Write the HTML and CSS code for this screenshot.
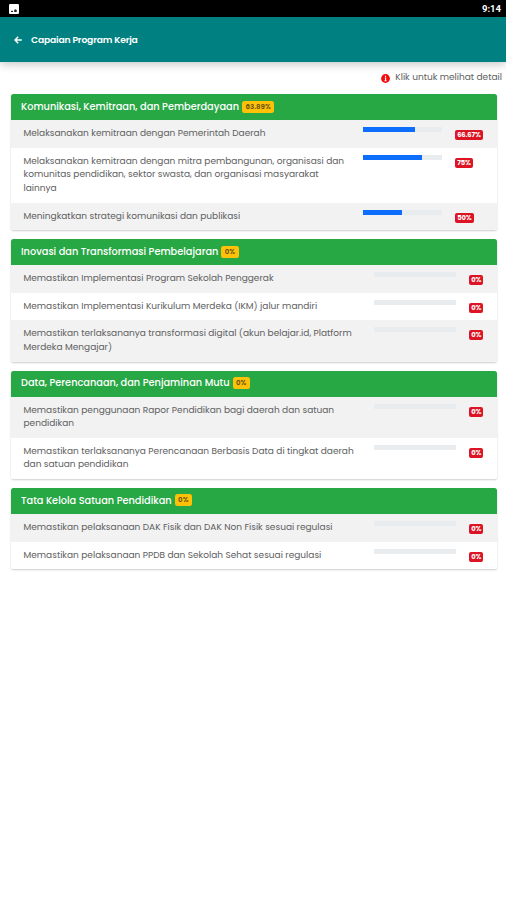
FILE: index.html
```html
<!DOCTYPE html>
<html lang="id">
<head>
<meta charset="utf-8">
<title>Capaian Program Kerja</title>
<link rel="stylesheet" href="styles.css">
</head>
<body>
<div class="status">
  <svg width="10" height="10" viewBox="0 0 10 10"><rect width="10" height="10" rx="1.2" fill="#fff"/><path d="M2 8V6.6l1 .6L4 6.6V8zM5.2 8V6l1.2-.8L7.7 6v2z" fill="#222"/></svg>
  <span class="clock">9:14</span>
</div>
<header class="appbar">
  <svg width="8" height="8" viewBox="0 0 8 8" fill="none" stroke="#fff" stroke-width="1.5"><path d="M7.8 4H1M4.2.8 1 4l3.2 3.2"/></svg>
  <h1>Capaian Program Kerja</h1>
</header>
<main>
  <p class="hint"><svg width="9" height="9" viewBox="0 0 9 9"><circle cx="4.5" cy="4.5" r="4.4" fill="#f50a0a"/><path d="M4.5 1.7v1.2M3.8 4h.8v2.7M3.5 6.7h2" stroke="#fff" stroke-width="1.1" fill="none"/></svg><span>Klik untuk melihat detail</span></p>

  <section class="card wide">
    <h2><span>Komunikasi, Kemitraan, dan Pemberdayaan</span><b class="tag">63.89%</b></h2>
    <div class="row"><p>Melaksanakan kemitraan dengan Pemerintah Daerah</p><div class="bar"><i style="width:66.67%"></i></div><b class="pct">66.67%</b></div>
    <div class="row"><p>Melaksanakan kemitraan dengan mitra pembangunan, organisasi dan<br>komunitas pendidikan, sektor swasta, dan organisasi masyarakat<br>lainnya</p><div class="bar"><i style="width:75%"></i></div><b class="pct">75%</b></div>
    <div class="row"><p>Meningkatkan strategi komunikasi dan publikasi</p><div class="bar"><i style="width:50%"></i></div><b class="pct">50%</b></div>
  </section>

  <section class="card">
    <h2><span>Inovasi dan Transformasi Pembelajaran</span><b class="tag">0%</b></h2>
    <div class="row"><p>Memastikan Implementasi Program Sekolah Penggerak</p><div class="bar"></div><b class="pct">0%</b></div>
    <div class="row"><p>Memastikan Implementasi Kurikulum Merdeka (IKM) jalur mandiri</p><div class="bar"></div><b class="pct">0%</b></div>
    <div class="row"><p>Memastikan terlaksananya transformasi digital (akun belajar.id, Platform<br>Merdeka Mengajar)</p><div class="bar"></div><b class="pct">0%</b></div>
  </section>

  <section class="card">
    <h2><span>Data, Perencanaan, dan Penjaminan Mutu</span><b class="tag">0%</b></h2>
    <div class="row"><p>Memastikan penggunaan Rapor Pendidikan bagi daerah dan satuan<br>pendidikan</p><div class="bar"></div><b class="pct">0%</b></div>
    <div class="row"><p>Memastikan terlaksananya Perencanaan Berbasis Data di tingkat daerah<br>dan satuan pendidikan</p><div class="bar"></div><b class="pct">0%</b></div>
  </section>

  <section class="card">
    <h2><span>Tata Kelola Satuan Pendidikan</span><b class="tag">0%</b></h2>
    <div class="row"><p>Memastikan pelaksanaan DAK Fisik dan DAK Non Fisik sesuai regulasi</p><div class="bar"></div><b class="pct">0%</b></div>
    <div class="row"><p>Memastikan pelaksanaan PPDB dan Sekolah Sehat sesuai regulasi</p><div class="bar"></div><b class="pct">0%</b></div>
  </section>
</main>
</body>
</html>
```

FILE: styles.css
```css
* { box-sizing: border-box; }
body { margin: 0; background: #fff; color: #606060; font: 9px/13.6px Poppins, Inter, "Open Sans", sans-serif; }
h1, h2, p { margin: 0; }
svg { display: block; flex: none; }
.status { height: 17px; background: #000; display: flex; align-items: center; justify-content: space-between; padding: 1px 5px 0 9px; }
.clock { color: #fff; font: 700 9.5px/14px Roboto, sans-serif; }
.appbar { height: 45px; background: #008080; display: flex; align-items: center; gap: 9px; padding: 0 14px; box-shadow: 0 2px 9px rgba(0, 0, 0, .24); }
h1 { color: #fff; font-size: 9.2px; font-weight: 600; letter-spacing: -.17px; }
main { padding: 9px 9px 0 10.5px; }
.hint { display: flex; align-items: center; justify-content: flex-end; gap: 5px; height: 14px; margin: 0 -5px 9px 0; }
.card { width: 486.5px; margin-bottom: 8.8px; border-radius: 2.5px; overflow: hidden; box-shadow: 0 1px 2px rgba(0, 0, 0, .2); }
h2 { height: 26px; display: flex; align-items: center; gap: 3px; padding: 0 10.5px 1px; background: #28a745; color: #fff; font-size: 9.78px; font-weight: 500; }
.tag { height: 12px; padding: 0 3.5px; border-radius: 2.5px; background: #ffc107; color: #5b4a16; font-size: 7px; line-height: 12px; font-weight: 600; }
.row { display: grid; grid-template-columns: 350px 82px 1fr; padding: 7px 0 7.1px 13px; background: #fff; }
.row:nth-child(even) { background: #f2f2f2; }
.row p { white-space: nowrap; }
.bar { height: 5px; background: #e9ecef; }
.bar i { display: block; height: 100%; background: #0d6efd; }
.wide .row { grid-template-columns: 339.5px 78.5px 1fr; }
.pct { justify-self: start; height: 10px; margin: 3px 0 0 13.5px; padding: 0 2.2px; border-radius: 2px; background: #dc1424; color: #fff; font-size: 6.8px; line-height: 10px; font-weight: 700; letter-spacing: -.15px; }
```
